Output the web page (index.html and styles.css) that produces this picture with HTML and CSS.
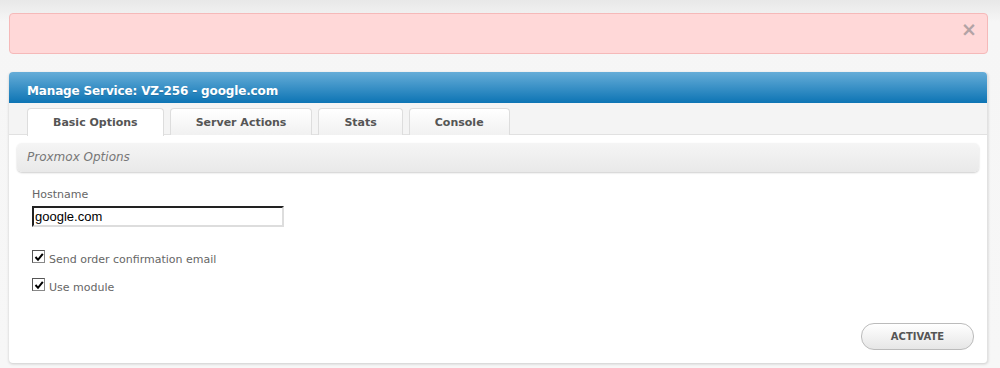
FILE: index.html
```html
<!DOCTYPE html>
<html lang="en">
<head>
    <meta charset="UTF-8">
    <title>Manage Service</title>
    <link rel="stylesheet" href="styles.css">
</head>
<body>
    <div class="alert">
        <span class="alert-close">&times;</span>
    </div>

    <div class="panel">
        <div class="panel-header">Manage Service: VZ-256 - google.com</div>

        <div class="tabs">
            <div class="tab active">Basic Options</div>
            <div class="tab">Server Actions</div>
            <div class="tab">Stats</div>
            <div class="tab">Console</div>
        </div>

        <div class="panel-body">
            <div class="section-bar">Proxmox Options</div>

            <div class="form">
                <label class="field-label" for="hostname">Hostname</label>
                <input class="text-input" type="text" id="hostname" value="google.com">

                <label class="check-row first">
                    <span class="check-box">
                        <svg width="10" height="10" viewBox="0 0 10 10"><path d="M1.5 5 L4 7.8 L8.8 1.8" fill="none" stroke="#000" stroke-width="2"/></svg>
                    </span>
                    Send order confirmation email
                </label>
                <label class="check-row">
                    <span class="check-box">
                        <svg width="10" height="10" viewBox="0 0 10 10"><path d="M1.5 5 L4 7.8 L8.8 1.8" fill="none" stroke="#000" stroke-width="2"/></svg>
                    </span>
                    Use module
                </label>
            </div>

            <div class="actions">
                <button class="btn">ACTIVATE</button>
            </div>
        </div>
    </div>
</body>
</html>
```

FILE: styles.css
```css
body {
    margin: 0;
    padding: 13px 12px 0 9px;
    font-family: "DejaVu Sans", Verdana, sans-serif;
    background: linear-gradient(#e8e8e8, #f6f6f6 22px, #f7f7f7);
    min-height: 368px;
    box-sizing: border-box;
}
.alert {
    height: 41px;
    box-sizing: border-box;
    background: #ffd8d8;
    border: 1px solid #f5b9b9;
    border-radius: 4px;
    position: relative;
}
.alert-close {
    position: absolute;
    right: 10px;
    top: 4px;
    font-size: 19px;
    font-weight: bold;
    color: #b3a3a5;
    line-height: 22px;
}
.panel {
    margin-top: 18px;
    background: #ffffff;
    border-radius: 4px;
    box-shadow: 0 1px 3px rgba(0, 0, 0, 0.18);
    border-right: 1px solid #e2e2e2;
}
.panel-header {
    height: 28px;
    padding: 3px 0 0 18px;
    line-height: 33px;
    border-radius: 4px 4px 0 0;
    background: linear-gradient(#66add8, #0d74b4);
    color: #ffffff;
    font-weight: bold;
    font-size: 12px;
    letter-spacing: -0.14px;
    text-shadow: 0 1px 0 rgba(0, 0, 0, 0.15);
}
.tabs {
    display: flex;
    gap: 6px;
    height: 32px;
    box-sizing: border-box;
    padding: 5px 0 0 18px;
    background: #f4f4f4;
    border-bottom: 1px solid #e1e1e1;
}
.tab {
    height: 27px;
    box-sizing: border-box;
    padding: 0 25px;
    line-height: 27px;
    font-size: 11px;
    font-weight: bold;
    color: #555555;
    background: linear-gradient(#ffffff, #f1f1f1);
    border: 1px solid #dddddd;
    border-bottom: none;
    border-radius: 4px 4px 0 0;
}
.tab.active {
    height: 28px;
    background: #ffffff;
    margin-bottom: -1px;
}
.tab.wide {
    padding: 0 27px;
}
.panel-body {
    padding: 8px 8px 13px 8px;
}
.section-bar {
    height: 29px;
    line-height: 29px;
    padding-left: 10px;
    border-radius: 5px;
    background: linear-gradient(#f5f5f5, #e9e9e9);
    box-shadow: 0 1px 2px rgba(0, 0, 0, 0.2);
    font-size: 12px;
    font-style: italic;
    color: #777777;
}
.form {
    padding: 16px 0 0 15px;
    display: flex;
    flex-direction: column;
    align-items: flex-start;
}
.field-label {
    font-size: 11px;
    line-height: 14px;
    color: #666666;
}
.text-input {
    margin: 4px 0 0 0;
    width: 252px;
    height: 21px;
    box-sizing: border-box;
    padding: 0 1px;
    border: 2px inset #dddddd;
    border-top-color: #777777;
    border-left-color: #777777;
    font-family: "Liberation Sans", Arial, sans-serif;
    font-size: 13px;
    color: #000000;
}
.check-row {
    display: flex;
    align-items: flex-start;
    gap: 4px;
    height: 14px;
    line-height: 14px;
    margin-top: 14px;
    font-size: 11px;
    color: #666666;
}
.check-row.first {
    margin-top: 26px;
}
.check-box {
    width: 13px;
    height: 13px;
    box-sizing: border-box;
    border: 1px solid #888888;
    border-top-color: #555555;
    border-left-color: #555555;
    background: #ffffff;
    display: flex;
    align-items: center;
    justify-content: center;
    margin-top: -3px;
}
.actions {
    display: flex;
    justify-content: flex-end;
    margin-top: 28px;
    padding-right: 5px;
}
.btn {
    width: 113px;
    height: 27px;
    border: 1px solid #bbbbbb;
    border-radius: 13px;
    background: linear-gradient(#ffffff, #e6e6e6);
    font-family: "DejaVu Sans", Verdana, sans-serif;
    font-size: 10px;
    font-weight: bold;
    color: #555555;
    cursor: pointer;
}
```
